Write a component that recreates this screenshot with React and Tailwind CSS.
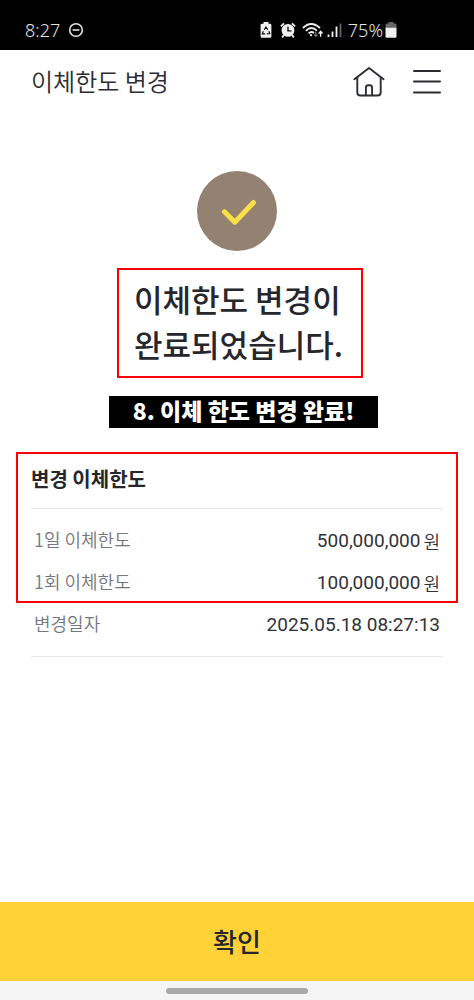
const LIMITS = [
    { id: 'daily', label: '1일 이체한도', amount: '500,000,000' },
    { id: 'single', label: '1회 이체한도', amount: '100,000,000' },
]

function StatusBar() {
    return (
        <div className="flex h-[50px] items-center bg-black pt-[10px] pl-[25px] pr-[77px] font-['Noto_Sans'] text-lg font-light text-[#e4e4e4]">
            <span>8:27</span>
            <svg className="ml-2 h-4 w-4" viewBox="0 0 16 16" fill="none" stroke="currentColor" strokeWidth="1.6">
                <circle cx="8" cy="8" r="6.3" />
                <path d="M4.6 8h6.8" />
            </svg>

            <div className="ml-auto flex items-center">
                {/* Protección de batería */}
                <svg className="h-4 w-3" viewBox="0 0 12 16">
                    <path d="M3.5 1.8V0h5v1.8H10q1.4 0 1.4 1.4v11.2q0 1.4-1.4 1.4H2q-1.4 0-1.4-1.4V3.2Q.6 1.8 2 1.8z" fill="#f0f0f0" />
                    <path d="M4.2 7.8 6 5l1.8 2.8M8.8 9.2l1 2.3-3 .3M5.2 11.8H2.3l1.1-2.6" fill="none" stroke="#111" strokeWidth="1.2" />
                </svg>
                {/* Alarma */}
                <svg className="ml-2 h-4 w-4" viewBox="0 0 16 16">
                    <circle cx="8" cy="8.4" r="6.4" fill="#f0f0f0" />
                    <path d="M.9 4.4 4 1.4M15.1 4.4l-3.1-3M3.8 13 2.2 15.4M12.2 13l1.6 2.4" stroke="#f0f0f0" strokeWidth="1.8" />
                    <path d="M8 4.8v4.1h3.4" fill="none" stroke="#111" strokeWidth="1.4" />
                </svg>
                {/* Wifi */}
                <svg className="ml-[6px] h-4 w-[21px]" viewBox="0 0 21 16" fill="none" stroke="#f0f0f0" strokeWidth="1.8">
                    <path d="M1 6Q9 -2 18 6M3.8 8.8Q9.3 3.4 15 8.6M6.6 11.4Q9.4 8.8 12 11" />
                    <circle cx="9" cy="13.2" r="1.1" fill="#f0f0f0" stroke="none" />
                    <path d="M13.8 9.5v4.8M12.2 12.6l1.6 1.8 1.6-1.8" stroke="#777" strokeWidth="1.2" />
                    <path d="M18.6 14.8V9.6M16.6 11.6l2-2.2 2 2.2" strokeWidth="1.4" />
                </svg>
                {/* Señal */}
                <svg className="ml-1 h-4 w-[15px]" viewBox="0 0 15 16" strokeWidth="1.8">
                    <path d="M1.5 15v-2.5M5.5 15V9.5M9.5 15V4.5" stroke="#f0f0f0" />
                    <path d="M13.5 15V1.5" stroke="#666" />
                </svg>
                <span className="ml-[6px]">75%</span>
                <svg className="ml-[2px] h-4 w-3" viewBox="0 0 12 16">
                    <path d="M3.5 1.6V0h5v1.6H10q1.5 0 1.5 1.5V6H.5V3.1q0-1.5 1.5-1.5z" fill="#666" />
                    <path d="M.5 5.8h11v8.5q0 1.5-1.5 1.5H2q-1.5 0-1.5-1.5z" fill="#f0f0f0" />
                </svg>
            </div>
        </div>
    )
}

function Header() {
    return (
        <header className="flex h-16 items-center justify-between pl-[31px] pr-8 text-[#2b2d33]">
            <h1 className="pb-[3px] text-2xl font-[350]">이체한도 변경</h1>
            <div className="flex items-center gap-[27px]">
                <button type="button" aria-label="홈">
                    <svg className="h-8 w-8" viewBox="0 0 32 32" fill="none" stroke="currentColor" strokeWidth="1.9" strokeLinecap="round" strokeLinejoin="round">
                        <path d="M1.4 13.2 16 1.9l14.6 11.3" />
                        <path d="M4.3 11.5V26.5q0 3 3 3h17.4q3 0 3-3V11.5" />
                        <path d="M12.9 29.3v-7.6q0-2.4 2.4-2.4h1.4q2.4 0 2.4 2.4v7.6" />
                    </svg>
                </button>
                <button type="button" aria-label="메뉴">
                    <svg className="h-8 w-[30px]" viewBox="0 0 30 32" fill="none" stroke="currentColor" strokeWidth="2" strokeLinecap="round">
                        <path d="M2 5h26M2 15.6h26M2 26.6h26" />
                    </svg>
                </button>
            </div>
        </header>
    )
}

export default function App() {
    return (
        <div className="flex min-h-screen flex-col bg-white font-['Noto_Sans_CJK_KR',sans-serif] text-[#25272c]">
            <StatusBar />
            <Header />

            <main className="flex flex-1 flex-col">
                <div className="flex flex-col items-center pt-[57px]">
                    <div className="flex h-20 w-20 items-center justify-center rounded-full bg-[#938272]">
                        <svg className="h-10 w-10" viewBox="0 0 40 40" fill="none" stroke="#fde047" strokeWidth="5" strokeLinecap="round" strokeLinejoin="round">
                            <path d="M7.5 20.8 17.8 31.2 36.5 11.5" />
                        </svg>
                    </div>
                    <h2 className="mt-[17px] ml-[6px] border-2 border-[#fb0007] pt-[6px] pb-[10px] pl-[15px] pr-[18px] text-[31px] leading-[45px] font-medium">
                        이체한도 변경이
                        <br />
                        완료되었습니다.
                    </h2>
                    <p className="mt-[18px] ml-[13px] bg-black px-6 pb-1 text-[23px] leading-7 font-black text-white">
                        8. 이체 한도 변경 완료!
                    </p>
                </div>

                {/* Resumen de los nuevos límites */}
                <section className="mt-6 mx-4 border-2 border-[#fb0007] px-[13px] pb-[5px]">
                    <h3 className="border-b border-[#e6eaeb] pt-[10px] pb-[14px] text-xl leading-[30px] font-bold">변경 이체한도</h3>
                    <dl className="mt-[19px] flex flex-col gap-4 px-[3px]">
                        {LIMITS.map((item) => (
                            <div key={item.id} className="flex items-start justify-between">
                                <dt className="text-lg leading-[22px] font-[350] text-[#74777f]">{item.label}</dt>
                                <dd className="flex items-center gap-[3px] text-[#303238]">
                                    <span className="font-[Roboto] text-[19px] leading-[26px]">{item.amount}</span>
                                    <span className="text-lg leading-[26px] font-[350]">원</span>
                                </dd>
                            </div>
                        ))}
                    </dl>
                </section>
                <dl className="mx-[31px] border-b border-[#e6eaeb] px-[3px] pt-[9px] pb-[18px]">
                    <div className="flex items-start justify-between">
                        <dt className="text-lg leading-[22px] font-[350] text-[#74777f]">변경일자</dt>
                        <dd className="font-[Roboto] text-[19px] leading-[26px] text-[#303238]">2025.05.18 08:27:13</dd>
                    </div>
                </dl>
            </main>

            <button type="button" className="h-[79px] w-full bg-[#ffd237] pb-[3px] text-[26px] font-medium">
                확인
            </button>
            <div className="flex h-[19px] items-center justify-center bg-[#f5f5f5]">
                <div className="h-[6px] w-[142px] rounded-full bg-[#a9a9a9]" />
            </div>
        </div>
    )
}
